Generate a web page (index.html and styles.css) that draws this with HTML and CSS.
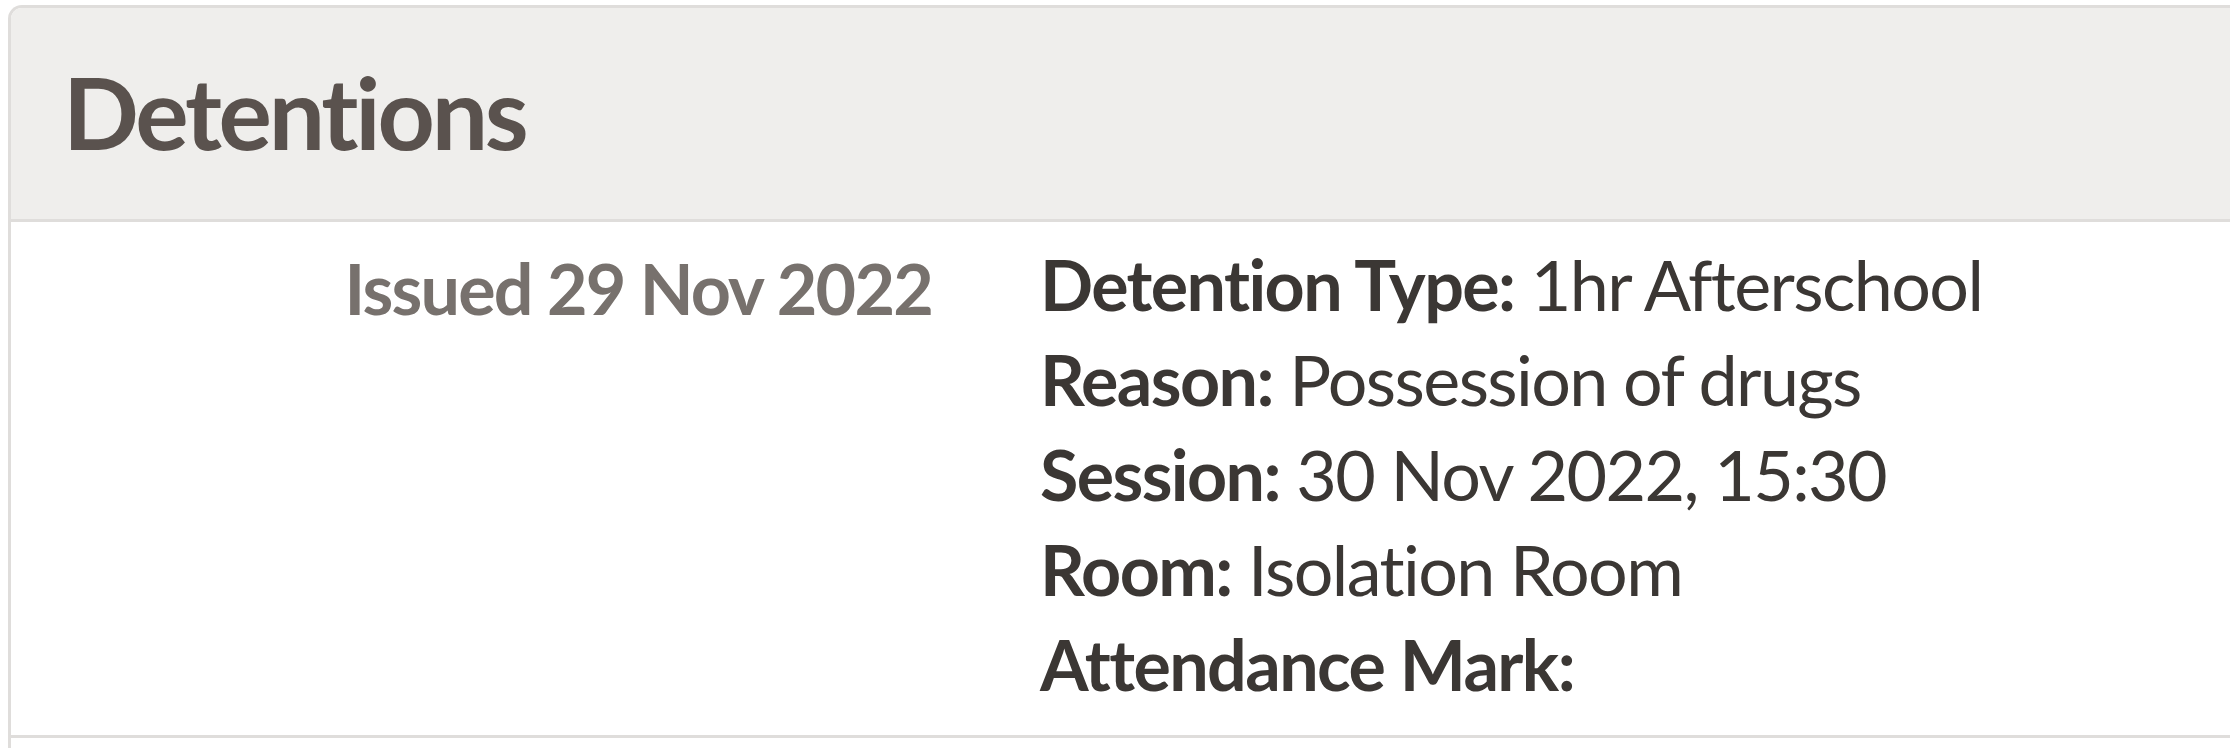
FILE: index.html
```html
<!DOCTYPE html>
<html lang="en">
<head>
<meta charset="utf-8">
<title>Detentions</title>
<link rel="stylesheet" href="styles.css">
</head>
<body>
<section class="card">
  <header class="card-header">
    <h1 class="card-title">Detentions</h1>
  </header>
  <div class="row">
    <div class="issued">Issued 29 Nov 2022</div>
    <div class="details">
      <div class="line"><span class="label">Detention Type:</span> 1hr Afterschool</div>
      <div class="line"><span class="label">Reason:</span> Possession of drugs</div>
      <div class="line"><span class="label">Session:</span> 30 Nov 2022, 15:30</div>
      <div class="line"><span class="label">Room:</span> Isolation Room</div>
      <div class="line"><span class="label">Attendance Mark:</span></div>
    </div>
  </div>
  <div class="row-end"></div>
</section>
</body>
</html>
```
FILE: styles.css
```css
html, body {
  margin: 0;
  padding: 0;
  background: #ffffff;
}
body {
  font-family: Lato, "Open Sans", sans-serif;
  font-variant-ligatures: none;
  font-feature-settings: "liga" 0;
  overflow: hidden;
  width: 2230px;
  height: 748px;
}
.card {
  margin: 5px 0 0 8px;
  width: 2300px;
  border-top: 3px solid #dfdddb;
  border-left: 3px solid #dfdddb;
  border-top-left-radius: 14px;
  background: #fff;
}
.card-header {
  background: #efeeec;
  border-bottom: 3px solid #dfdddb;
  border-top-left-radius: 11px;
  padding: 43px 0 48px 52px;
}
.card-title {
  margin: 0;
  font-size: 100px;
  line-height: 120px;
  font-weight: 700;
  letter-spacing: -3.2px;
  color: #5a524e;
}
.row {
  display: flex;
  padding: 15px 0 23px 0;
}
.issued {
  width: 921px;
  box-sizing: border-box;
  text-align: right;
  padding-top: 4px;
  font-size: 70px;
  line-height: 95px;
  font-weight: 700;
  letter-spacing: -1.8px;
  color: #77716d;
}
.details {
  margin-left: 108px;
  font-size: 70px;
  line-height: 95px;
  letter-spacing: -1.6px;
  color: #3b3734;
}
.label {
  font-weight: 700;
}
.row-end {
  border-top: 3px solid #dfdddb;
  height: 10px;
}
```
